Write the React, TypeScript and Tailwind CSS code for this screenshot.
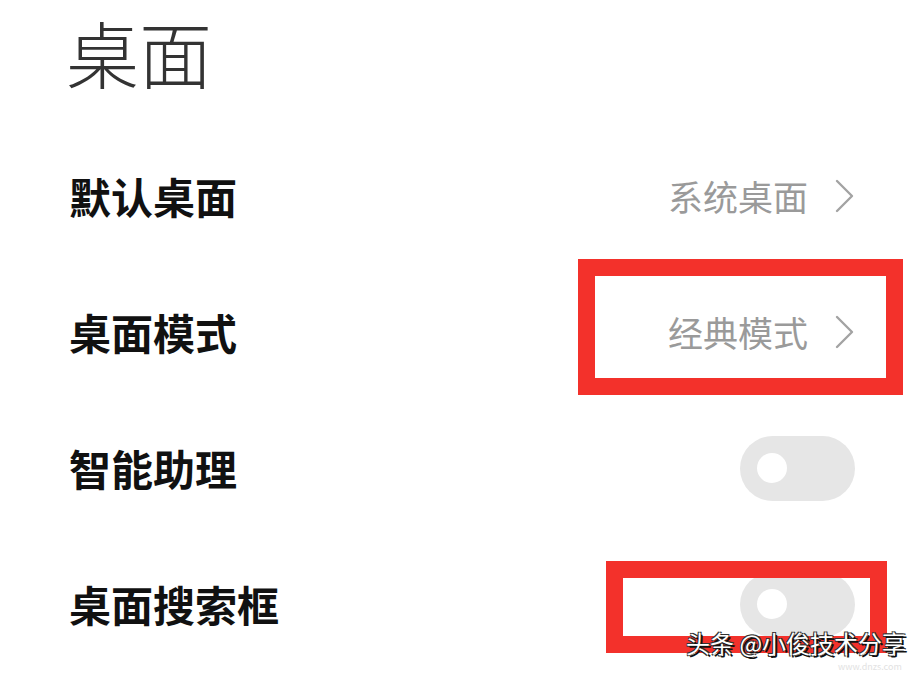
import React from 'react';

type Row = {
  label: string;
  value?: string;
  toggle?: boolean;
};

const rows: Row[] = [
  { label: '默认桌面', value: '系统桌面' },
  { label: '桌面模式', value: '经典模式' },
  { label: '智能助理', toggle: true },
  { label: '桌面搜索框', toggle: true },
];

const Chevron = () => (
  <svg width="20" height="34" viewBox="0 0 20 34" fill="none" className="shrink-0">
    <path d="M2 2 L17 17 L2 32" stroke="#a3a3a3" strokeWidth="2.4" strokeLinecap="round" strokeLinejoin="round" />
  </svg>
);

const Toggle = () => (
  <div className="flex h-[65px] w-[115px] items-center rounded-full bg-[#e6e6e6] pl-[17px]">
    <div className="h-[30px] w-[30px] rounded-full bg-white" />
  </div>
);

const App = () => {
  return (
    <div
      className="relative h-[675px] w-[923px] overflow-hidden bg-white"
      style={{ fontFamily: '"Noto Sans CJK SC", "Noto Sans", sans-serif' }}
    >
      <div className="pl-[66px] pr-[68px]">
        <h1 className="text-[73px] font-light leading-[102px] text-[#333333]">桌面</h1>

        <div className="mt-[26px]">
          {rows.map((row) => (
            <div key={row.label} className="flex h-[136px] items-center justify-between">
              <span className="pl-[3px] text-[42px] font-bold leading-[60px] text-[#111111]">{row.label}</span>
              {row.toggle ? (
                <Toggle />
              ) : (
                <div className="flex items-center gap-[27px]">
                  <span className="text-[35px] leading-[50px] text-[#9a9a9a]">{row.value}</span>
                  <Chevron />
                </div>
              )}
            </div>
          ))}
        </div>
      </div>

      {/* annotation boxes */}
      <div className="absolute left-[578px] top-[259px] h-[136px] w-[325px] border-[17px] border-[#f3312b]" />
      <div className="absolute left-[606px] top-[561px] h-[92px] w-[281px] border-[17px] border-[#f3312b]" />

      {/* watermark */}
      <div
        className="absolute left-[686px] top-[627px] whitespace-nowrap text-[24px] leading-[32px] text-white"
        style={{ textShadow: '2px 2px 0 #111, -1px -1px 0 #333, 1px -1px 0 #333, -1px 1px 0 #333' }}
      >
        头条 @小俊技术分享
      </div>
      <div className="absolute left-[838px] top-[661px] whitespace-nowrap text-[9px] leading-[12px] text-[#e2e2e2]">
        www.dnzs.com
      </div>
    </div>
  );
};

export default App;
